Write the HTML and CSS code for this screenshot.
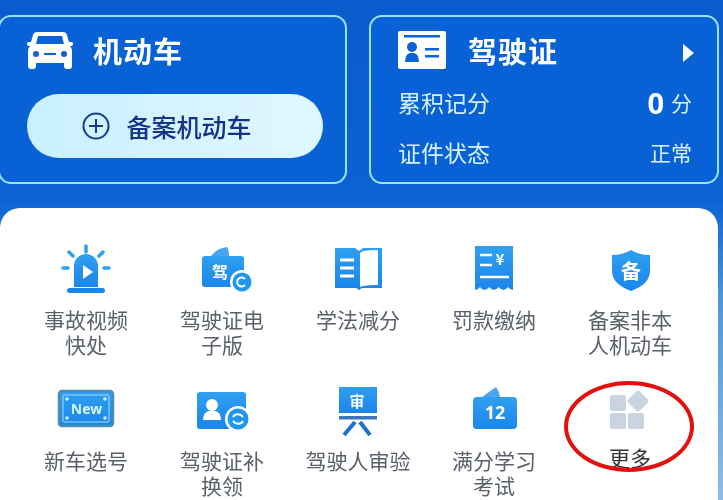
FILE: index.html
```html
<!DOCTYPE html>
<html lang="zh">
<head>
<meta charset="utf-8">
<title>服务</title>
<link rel="stylesheet" href="styles.css">
</head>
<body>
<svg class="defs" aria-hidden="true"><defs>
<linearGradient id="g" x1="0" y1="0" x2="0" y2="1"><stop offset="0" stop-color="#2f9ff0"/><stop offset="1" stop-color="#1a86ec"/></linearGradient>
</defs></svg>
<div class="page">
  <section class="cards">
    <div class="card card-car">
      <div class="head">
        <svg class="car" width="46" height="38" viewBox="0 0 46 38"><path fill="#fff" d="M10 1h26q3 0 4 3l2 7h3q1 0 1 2t-3 2q2 2 2 6v14q0 3-3 3h-2q-3 0-3-3v-3H9v3q0 3-3 3H4q-3 0-3-3V21q0-4 2-6-3 0-3-2t1-2h3l2-7q1-3 4-3zm1 4-2 8h28l-2-8z"/><circle cx="9" cy="23" r="3" fill="#0b63d6"/><circle cx="37" cy="23" r="3" fill="#0b63d6"/><rect x="17" y="22" width="12" height="2" fill="#0b63d6"/></svg>
        <h2 class="title">机动车</h2>
      </div>
      <button class="add">
        <svg width="28" height="28" viewBox="0 0 28 28"><circle cx="14" cy="14" r="12.5" fill="none" stroke="#123a8e" stroke-width="2"/><path d="M14 7v14M7 14h14" stroke="#123a8e" stroke-width="2"/></svg>
        <span>备案机动车</span>
      </button>
    </div>
    <div class="card card-lic">
      <div class="head">
        <svg width="48" height="38" viewBox="0 0 48 38"><rect width="48" height="38" rx="2" fill="#fff"/><rect x="6" y="4" width="36" height="2.5" fill="#0b63d6"/><circle cx="14" cy="16" r="5" fill="#0b63d6"/><path d="M7 31q0-8 5-9h4q5 1 5 9z" fill="#0b63d6"/><path d="M27 17h14v2.500H27zM27 24h14v2.500H27z" fill="#0b63d6"/></svg>
        <h2 class="title title-lic">驾驶证</h2>
        <span class="arrow"></span>
      </div>
      <div class="row row-score"><span>累积记分</span><span class="val"><b>0</b><i>分</i></span></div>
      <div class="row row-state"><span>证件状态</span><span class="state">正常</span></div>
    </div>
  </section>

  <section class="panel">
    <a class="item">
      <svg class="ico" viewBox="0 0 60 56"><path fill="url(#g)" d="M18 44V23a12 12 0 0 1 24 0V44Z"/><rect x="11" y="45" width="38" height="5" rx="2.5" fill="#1a86ec"/><path stroke="#2f9ff0" stroke-width="3.5" stroke-linecap="round" d="M30 3v6M13 9l4 4M47 9l-4 4M7 25h5M48 25h5"/><path fill="#fff" d="M27 22l10 7-10 7z"/></svg>
      <span class="label">事故视频<br>快处</span>
    </a>
    <a class="item">
      <svg class="ico" viewBox="0 0 60 56"><path fill="#4aa6ee" d="M19 13q6-8 16-9 2 3 2 9z"/><rect x="10" y="13" width="42" height="31" rx="3" fill="url(#g)"/><text x="28" y="35" class="t" font-size="16">驾</text><circle cx="50" cy="39" r="12" fill="#fff"/><circle cx="50" cy="39" r="9.5" fill="#2196ee"/><path d="M53 36a4.500 4.500 0 1 0 0 6" fill="none" stroke="#fff" stroke-width="2"/></svg>
      <span class="label">驾驶证电<br>子版</span>
    </a>
    <a class="item">
      <svg class="ico" viewBox="0 0 60 56"><path fill="url(#g)" d="M7 5h20l4 3 4-3h19v40H34l-3 2-3-2H7z"/><path fill="#fff" d="M32 10l3-2q6-1 15-1v35q-9 0-15 1l-3 1z"/><path stroke="#fff" stroke-width="3" d="M12 17h14M12 25h14M12 33h14"/></svg>
      <span class="label">学法减分</span>
    </a>
    <a class="item">
      <svg class="ico" viewBox="0 0 60 56"><path fill="url(#g)" d="M11 3h38v44q-3 0-5-3-2 3-4.500 3t-5-3q-2 3-4.500 3t-5-3q-2 3-4.500 3t-4.500-3q-2 3-5 3z"/><path stroke="#fff" stroke-width="2.500" d="M16 12h12M16 22h12M16 34h29"/><text x="36" y="22" class="t" font-size="15">¥</text></svg>
      <span class="label">罚款缴纳</span>
    </a>
    <a class="item">
      <svg class="ico" viewBox="0 0 60 56"><path fill="url(#g)" d="M31 7q8 5 19 5v16q0 13-19 20Q12 41 12 28V12q11 0 19-5z"/><text x="31" y="36" class="t" font-size="20">备</text></svg>
      <span class="label">备案非本<br>人机动车</span>
    </a>
    <a class="item">
      <svg class="ico" viewBox="0 0 60 56"><rect x="3" y="7" width="54" height="35" rx="3" fill="url(#g)" stroke="#4a8db5" stroke-width="2.500"/><rect x="7" y="11" width="46" height="27" rx="1" fill="none" stroke="#a9dcf8" stroke-width="1"/><text x="30.500" y="30" class="t t-new" font-size="14">New</text><g fill="#cdeeff"><circle cx="11" cy="15" r="1.800"/><circle cx="49" cy="15" r="1.800"/><circle cx="11" cy="34" r="1.800"/><circle cx="49" cy="34" r="1.800"/></g></svg>
      <span class="label">新车选号</span>
    </a>
    <a class="item">
      <svg class="ico" viewBox="0 0 60 56"><rect x="5" y="8" width="49" height="37" rx="3" fill="url(#g)"/><circle cx="20" cy="21" r="6" fill="#fff"/><path fill="#fff" d="M11 36q0-8 6-9h6q6 1 6 9z"/><circle cx="46" cy="35" r="13" fill="#fff"/><circle cx="46" cy="35" r="10.500" fill="#2196ee"/><path d="M41 33q2-4 8-2l2 2M51 37q-2 4-8 2l-2-2" fill="none" stroke="#fff" stroke-width="2"/></svg>
      <span class="label">驾驶证补<br>换领</span>
    </a>
    <a class="item">
      <svg class="ico" viewBox="0 0 60 56"><rect x="11" y="3" width="38" height="26" fill="url(#g)"/><rect x="11" y="32" width="38" height="3.500" fill="#3b76b8"/><path stroke="#1f72c8" stroke-width="4" d="M27 38 16 51M32 38 42 51"/><text x="29" y="23" class="t" font-size="15">审</text></svg>
      <span class="label">驾驶人审验</span>
    </a>
    <a class="item">
      <svg class="ico" viewBox="0 0 60 56"><path fill="#4aa6ee" d="M18 13 32 3q3 4 4 10z"/><rect x="9" y="13" width="44" height="32" rx="4" fill="url(#g)"/><text x="31" y="35" class="t t-num" font-size="18">12</text></svg>
      <span class="label">满分学习<br>考试</span>
    </a>
    <a class="item item-more">
      <svg class="ico" viewBox="0 0 60 56"><g fill="#c9d4e1"><rect x="10" y="11" width="16" height="16" rx="2"/><rect x="10" y="29" width="16" height="16" rx="2"/><rect x="28" y="29" width="16" height="16" rx="2"/><rect x="30" y="9" width="16" height="16" rx="2" transform="rotate(45 38 17)"/></g></svg>
      <span class="label label-more">更多</span>
      <span class="circle"></span>
    </a>
  </section>
</div>
</body>
</html>
```
FILE: styles.css
```css
html, body {
  margin: 0;
  height: 500px;
  overflow: hidden;
}
body {
  background: #0b62d4;
  font-family: "Noto Sans CJK SC", "Noto Sans", sans-serif;
}
.defs {
  position: absolute;
  width: 0;
  height: 0;
}
.page {
  width: 723px;
  height: 500px;
  overflow: hidden;
  filter: blur(0.5px);
  background: linear-gradient(180deg, #0a5ccc 0, #0b62d4 200px, #4f97d8 300px, #8fbce4 500px);
}
.cards {
  display: flex;
  gap: 22px;
  padding: 15px 4px 0 0;
  margin-left: -2px;
}
.card {
  box-sizing: border-box;
  height: 169px;
  border: 2px solid #98e2ff;
  border-radius: 13px;
  background: #0862d6;
  color: #fff;
}
.card-car {
  width: 350px;
  padding: 13px 0 0 27px;
}
.card-lic {
  width: 351px;
  padding: 13px 25px 0 27px;
}
.head {
  display: flex;
  align-items: center;
  height: 40px;
}
.title {
  margin: 0 0 0 20px;
  font-size: 29px;
  line-height: 40px;
  font-weight: 700;
  letter-spacing: 1px;
}
.title-lic {
  margin-left: 22px;
}
.arrow {
  margin: 6px -2px 0 auto;
  border-left: 11px solid #fff;
  border-top: 9px solid transparent;
  border-bottom: 9px solid transparent;
}
.add {
  display: flex;
  align-items: center;
  justify-content: center;
  gap: 16px;
  box-sizing: border-box;
  width: 296px;
  height: 64px;
  margin-top: 24px;
  padding: 0 16px 0 0;
  border: 0;
  border-radius: 32px;
  background: linear-gradient(90deg, #c9f0ff, #e0f7ff);
  color: #14348a;
  font: 500 25px/1 "Noto Sans CJK SC", sans-serif;
}
.row {
  display: flex;
  justify-content: space-between;
  align-items: center;
  height: 40px;
  font-size: 23px;
  color: #d8f2ff;
}
.row-score {
  margin-top: 12px;
}
.row-state {
  margin-top: 10px;
}
.val {
  display: flex;
  align-items: center;
}
.val b {
  font: 700 29px/1 "Noto Sans", sans-serif;
  color: #fff;
}
.val i {
  margin-left: 7px;
  font-style: normal;
  font-size: 21px;
}
.state {
  font-size: 21px;
}
.panel {
  display: grid;
  grid-template-columns: repeat(5, 136px);
  grid-auto-rows: 115px;
  row-gap: 26px;
  box-sizing: border-box;
  width: 718px;
  height: 320px;
  margin-top: 24px;
  padding: 35px 0 0 18px;
  background: #fff;
  border-radius: 20px 20px 0 0;
}
.item {
  position: relative;
  display: flex;
  flex-direction: column;
  align-items: center;
}
.ico {
  width: 60px;
  height: 56px;
  flex: none;
}
.t {
  fill: #fff;
  text-anchor: middle;
  font-weight: 700;
  font-family: "Noto Sans CJK SC", sans-serif;
}
.t-new {
  fill: #d5f2ff;
  font-family: "Noto Sans", sans-serif;
}
.t-num {
  font-family: "Noto Sans", sans-serif;
}
.label {
  margin-top: 8px;
  font-size: 21px;
  line-height: 25px;
  color: #5a616b;
  text-align: center;
  white-space: nowrap;
}
.label-more {
  margin-top: 5px;
  color: #333;
}
.circle {
  position: absolute;
  left: 2px;
  top: -3px;
  width: 130px;
  height: 91px;
  box-sizing: border-box;
  border: 4.500px solid #e2100f;
  border-radius: 50%;
}
```
